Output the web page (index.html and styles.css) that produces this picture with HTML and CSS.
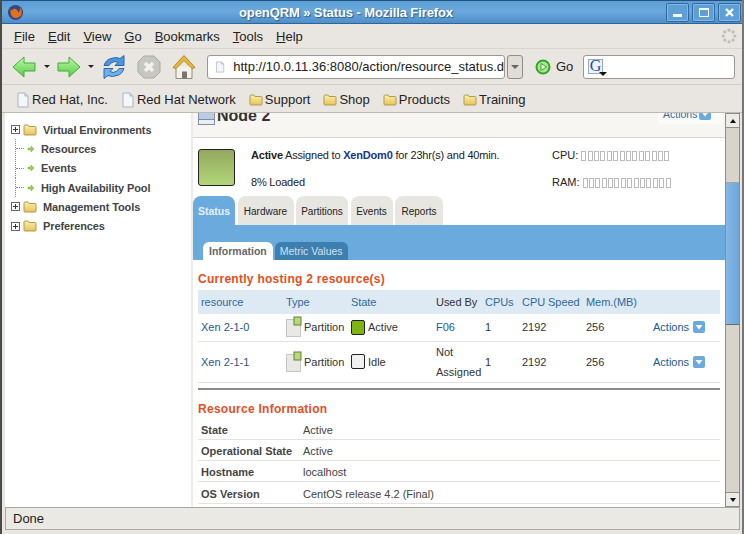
FILE: index.html
```html
<!DOCTYPE html>
<html lang="en">
<head>
<meta charset="utf-8">
<title>openQRM » Status - Mozilla Firefox</title>
<link rel="stylesheet" href="styles.css">
</head>
<body>
<svg class="defs" width="0" height="0">
  <defs>
    <linearGradient id="folderFill" x1="0" y1="0" x2="0" y2="1"><stop offset="0" stop-color="#fdf0a8"/><stop offset="1" stop-color="#e8c258"/></linearGradient>
    <linearGradient id="arrowFill" x1="0" y1="0" x2="0" y2="1"><stop offset="0" stop-color="#c4f8a6"/><stop offset="1" stop-color="#50cc48"/></linearGradient>
    <symbol id="folder" viewBox="0 0 14 12"><path d="M1 3V2q0-1 1-1h3l1 1.500h6q1 0 1 1V10q0 1-1 1H2q-1 0-1-1z" fill="url(#folderFill)" stroke="#b09a50"/></symbol>
    <symbol id="page" viewBox="0 0 14 16"><path d="M2 1h7l3 3v11H2z" fill="#f4f6fa" stroke="#a9b4c6"/><path d="M9 1v3h3" fill="#d5dce8" stroke="#a9b4c6"/></symbol>
    <symbol id="greenarrow" viewBox="0 0 8 8"><path d="M1 3h3V1l3 3-3 3V5H1z" fill="#9ccf50" stroke="#7aa83a" stroke-width=".5"/></symbol>
    <symbol id="down" viewBox="0 0 12 12"><rect width="12" height="12" rx="2" fill="#6aaadd"/><path d="M2.500 4h7L6 8.500z" fill="#fff"/></symbol>
    <symbol id="part" viewBox="0 0 16 22"><rect x=".5" y="3.500" width="14" height="17" fill="#e8e8e4" stroke="#999" stroke-dasharray="1 1"/><rect x="8" y="1" width="7" height="8" fill="#b5d97a" stroke="#66803c"/></symbol>
    <symbol id="seg" viewBox="0 0 5 10"><rect x=".5" y=".5" width="4" height="9" fill="#fff" stroke="#bbb"/></symbol>
  </defs>
</svg>
<div class="window">
  <header class="titlebar">
    <svg class="fx" width="17" height="17" viewBox="0 0 18 18"><circle cx="9" cy="9" r="8" fill="#33497e"/><path d="M3 5q1 3 1 5a6 6 0 0 0 11 2q2-5-2-9 2 4-1 6-1-4-4-4-2 0-3 2-1 0-2-2z" fill="#e2701c"/></svg>
    <span class="title">openQRM » Status - Mozilla Firefox</span>
    <div class="winbtns">
      <span class="winbtn"><i class="min"></i></span>
      <span class="winbtn"><i class="max"></i></span>
      <span class="winbtn"><svg width="11" height="11" viewBox="0 0 11 11"><path d="M2 2l7 7M9 2l-7 7" stroke="#fff" stroke-width="2.400"/></svg></span>
    </div>
  </header>

  <nav class="menubar">
    <span><u>F</u>ile</span><span><u>E</u>dit</span><span><u>V</u>iew</span><span><u>G</u>o</span><span><u>B</u>ookmarks</span><span><u>T</u>ools</span><span><u>H</u>elp</span>
    <svg class="throbber" width="16" height="16" viewBox="0 0 18 18" fill="#bdbdb8"><circle cx="9" cy="2.500" r="1.800"/><circle cx="13.600" cy="4.400" r="1.800"/><circle cx="15.500" cy="9" r="1.800"/><circle cx="13.600" cy="13.600" r="1.800"/><circle cx="9" cy="15.500" r="1.800"/><circle cx="4.400" cy="13.600" r="1.800"/><circle cx="2.500" cy="9" r="1.800"/><circle cx="4.400" cy="4.400" r="1.800"/></svg>
  </nav>

  <div class="navbar">
    <svg class="ic-back" width="24" height="24" viewBox="0 0 24 24"><path d="M1 12 12 2v6h11v8H12v6z" fill="url(#arrowFill)" stroke="#3fae35"/></svg>
    <i class="drop d-back"></i>
    <svg class="ic-fwd" width="24" height="24" viewBox="0 0 24 24"><path d="M23 12 12 2v6H1v8h11v6z" fill="url(#arrowFill)" stroke="#3fae35"/></svg>
    <i class="drop d-fwd"></i>
    <svg class="ic-reload" width="24" height="26" viewBox="0 0 24 25"><path d="M22 1v10h-9l3-3q-3-2-6 0-2 1-3 3H2q2-6 7-7 5-2 9 0z" fill="#4d94dc" stroke="#2a68ac"/><path d="M2 24V14h9l-3 3q3 2 6 0 2-1 3-3h5q-2 6-7 7-5 2-9 0z" fill="#6fb0ea" stroke="#2a68ac"/></svg>
    <svg class="ic-stop" width="24" height="24" viewBox="0 0 24 24"><path d="M7 1h10l6 6v10l-6 6H7l-6-6V7z" fill="#c6c6c2" stroke="#a8a8a4"/><path d="M8 8l8 8M16 8l-8 8" stroke="#f2f2f0" stroke-width="3.500"/></svg>
    <svg class="ic-home" width="24" height="26" viewBox="0 0 24 25"><path d="M4 12v12h16V12" fill="#f4f2ea" stroke="#8f8a78"/><path d="M10 24v-7h5v7" fill="#7b7468"/><path d="M1 13 12 1l11 12-3 1-8-8-8 8z" fill="#e8b83c" stroke="#a98a2a"/></svg>
    <div class="urlbar">
      <div class="urlinput"><svg width="14" height="16"><use href="#page"/></svg><span class="url">http://10.0.11.36:8080/action/resource_status.d</span></div>
      <span class="urldrop"><i></i></span>
    </div>
    <span class="go">
      <svg width="16" height="16" viewBox="0 0 16 16"><circle cx="8" cy="8" r="6.500" fill="#a6e88c" stroke="#36a32a" stroke-width="2"/><path d="M6 4.500 11.500 8 6 11.500z" fill="#f4fff0" stroke="#36a32a"/></svg>
      Go
    </span>
    <div class="search">
      <span class="gmark"><span class="g">G</span><i></i></span>
    </div>
  </div>

  <div class="bookmarks">
    <span class="bm"><svg width="14" height="16"><use href="#page"/></svg>Red Hat, Inc.</span>
    <span class="bm"><svg width="14" height="16"><use href="#page"/></svg>Red Hat Network</span>
    <span class="bm"><svg width="14" height="12"><use href="#folder"/></svg>Support</span>
    <span class="bm"><svg width="14" height="12"><use href="#folder"/></svg>Shop</span>
    <span class="bm"><svg width="14" height="12"><use href="#folder"/></svg>Products</span>
    <span class="bm"><svg width="14" height="12"><use href="#folder"/></svg>Training</span>
  </div>

  <div class="viewport">
    <aside class="tree">
      <div class="tree-row top"><i class="plus"></i><svg width="14" height="12"><use href="#folder"/></svg><b>Virtual Environments</b></div>
      <div class="tree-row leaf"><svg width="8" height="8"><use href="#greenarrow"/></svg><b>Resources</b></div>
      <div class="tree-row leaf"><svg width="8" height="8"><use href="#greenarrow"/></svg><b>Events</b></div>
      <div class="tree-row leaf"><svg width="8" height="8"><use href="#greenarrow"/></svg><b>High Availability Pool</b></div>
      <div class="tree-row top"><i class="plus"></i><svg width="14" height="12"><use href="#folder"/></svg><b>Management Tools</b></div>
      <div class="tree-row top"><i class="plus"></i><svg width="14" height="12"><use href="#folder"/></svg><b>Preferences</b></div>
    </aside>

    <main class="main">
      <div class="node-head">
        <svg class="node-ic" width="17" height="18" viewBox="0 0 17 18"><rect x=".5" y=".5" width="16" height="12" fill="#b9cde6" stroke="#7f8ea8"/><rect x=".5" y="12.500" width="16" height="5" fill="#eee" stroke="#7f8ea8"/></svg>
        <h1>Node 2</h1>
        <div class="node-actions"><span>Actions</span><svg width="12" height="12"><use href="#down"/></svg></div>
      </div>

      <div class="summary">
        <div class="loadbox"></div>
        <div class="summary-text">
          <div><b>Active</b> Assigned to <a class="strong">XenDom0</a> for 23hr(s) and 40min.</div>
          <div>8% Loaded</div>
        </div>
        <div class="meters">
          <div class="meter">CPU:<span class="segs"><svg width="5" height="10"><use href="#seg"/></svg><svg width="5" height="10"><use href="#seg"/></svg><svg width="5" height="10"><use href="#seg"/></svg><svg width="5" height="10"><use href="#seg"/></svg><svg width="5" height="10"><use href="#seg"/></svg><svg width="5" height="10"><use href="#seg"/></svg><svg width="5" height="10"><use href="#seg"/></svg><svg width="5" height="10"><use href="#seg"/></svg><svg width="5" height="10"><use href="#seg"/></svg><svg width="5" height="10"><use href="#seg"/></svg><svg width="5" height="10"><use href="#seg"/></svg><svg width="5" height="10"><use href="#seg"/></svg><svg width="5" height="10"><use href="#seg"/></svg><svg width="5" height="10"><use href="#seg"/></svg></span></div>
          <div class="meter">RAM:<span class="segs"><svg width="5" height="10"><use href="#seg"/></svg><svg width="5" height="10"><use href="#seg"/></svg><svg width="5" height="10"><use href="#seg"/></svg><svg width="5" height="10"><use href="#seg"/></svg><svg width="5" height="10"><use href="#seg"/></svg><svg width="5" height="10"><use href="#seg"/></svg><svg width="5" height="10"><use href="#seg"/></svg><svg width="5" height="10"><use href="#seg"/></svg><svg width="5" height="10"><use href="#seg"/></svg><svg width="5" height="10"><use href="#seg"/></svg><svg width="5" height="10"><use href="#seg"/></svg><svg width="5" height="10"><use href="#seg"/></svg><svg width="5" height="10"><use href="#seg"/></svg><svg width="5" height="10"><use href="#seg"/></svg></span></div>
        </div>
      </div>

      <div class="tabs">
        <span class="tab active">Status</span><span class="tab">Hardware</span><span class="tab">Partitions</span><span class="tab">Events</span><span class="tab">Reports</span>
      </div>
      <div class="band">
        <span class="subtab on">Information</span><span class="subtab">Metric Values</span>
      </div>

      <div class="content">
        <h2>Currently hosting 2 resource(s)</h2>
        <table class="res">
          <thead>
            <tr><th class="c1 lnk">resource</th><th class="c2 lnk">Type</th><th class="c3 lnk">State</th><th class="c4">Used By</th><th class="c5 lnk">CPUs</th><th class="c6 lnk">CPU Speed</th><th class="c7 lnk">Mem.(MB)</th><th class="c8"></th></tr>
          </thead>
          <tbody>
            <tr class="r1">
              <td><a>Xen 2-1-0</a></td>
              <td><span class="cell"><svg width="16" height="22"><use href="#part"/></svg>Partition</span></td>
              <td><span class="cell"><i class="state green"></i>Active</span></td>
              <td><a>F06</a></td><td>1</td><td>2192</td><td>256</td>
              <td><span class="cell act"><a>Actions</a><svg width="12" height="12"><use href="#down"/></svg></span></td>
            </tr>
            <tr class="r2">
              <td><a>Xen 2-1-1</a></td>
              <td><span class="cell"><svg width="16" height="22"><use href="#part"/></svg>Partition</span></td>
              <td><span class="cell"><i class="state idle"></i>Idle</span></td>
              <td>Not Assigned</td><td>1</td><td>2192</td><td>256</td>
              <td><span class="cell act"><a>Actions</a><svg width="12" height="12"><use href="#down"/></svg></span></td>
            </tr>
          </tbody>
        </table>
        <hr class="rule">
        <h2 class="after-rule">Resource Information</h2>
        <dl class="info">
          <div><dt>State</dt><dd>Active</dd></div>
          <div><dt>Operational State</dt><dd>Active</dd></div>
          <div><dt>Hostname</dt><dd>localhost</dd></div>
          <div><dt>OS Version</dt><dd>CentOS release 4.2 (Final)</dd></div>
        </dl>
      </div>
    </main>

    <div class="scrollbar">
      <span class="sb-btn"><i class="up"></i></span>
      <div class="sb-track"><div class="sb-gap"></div><div class="sb-thumb"></div></div>
      <span class="sb-btn"><i class="dn"></i></span>
    </div>
  </div>

  <footer class="statusbar">Done</footer>
</div>
</body>
</html>
```
FILE: styles.css
```css
* { box-sizing: border-box; }
html, body { margin: 0; padding: 0; }
body { width: 744px; height: 534px; overflow: hidden; background: #e9e6e1; font-family: "Liberation Sans", Arial, sans-serif; color: #222; }
.defs { position: absolute; }
.window { width: 744px; height: 534px; display: flex; flex-direction: column; background: #e9e6e1; border-left: 2px solid #4a4a48; border-right: 2px solid #777; overflow: hidden; }

.titlebar { height: 24px; flex: none; margin: 0 -2px; display: flex; align-items: center; background: linear-gradient(#5b9ed6, #6ba8dd 45%, #4f8fc9); border-top: 1px solid #26507c; border-bottom: 1px solid #2f6496; position: relative; padding-left: 7px; }
.fx { flex: none; }
.title { position: absolute; left: 0; right: 0; text-align: center; padding-right: 52px; font-size: 13px; font-weight: bold; letter-spacing: -.1px; color: #fff; text-shadow: 1px 1px 1px #2c5b8a; }
.winbtns { margin-left: auto; display: flex; gap: 3px; padding-right: 3px; position: relative; }
.winbtn { width: 23px; height: 19px; border: 1px solid #2f6a9e; border-radius: 2px; background: #5f9fd8; display: flex; align-items: center; justify-content: center; box-shadow: inset 0 0 0 1px #86b8e4; }
.min { width: 9px; height: 3px; background: #fff; margin-top: 7px; }
.max { width: 10px; height: 9px; border: 1px solid #fff; border-top-width: 2px; }

.menubar { height: 25px; flex: none; display: flex; align-items: center; gap: 13px; padding-left: 12px; font-size: 13px; color: #222; border-bottom: 1px solid #d8d5ce; position: relative; }
.menubar span { white-space: nowrap; }
.throbber { margin-left: auto; margin-right: 5px; }

.navbar { height: 36px; flex: none; display: flex; align-items: center; padding-left: 10px; border-bottom: 1px solid #d0cdc6; font-size: 13px; }
.drop { width: 0; height: 0; border: 3px solid transparent; border-top: 3px solid #222; border-bottom: 0; }
.d-back { margin-left: 8px; margin-right: 7px; }
.d-fwd { margin-left: 7px; margin-right: 8px; }
.ic-stop { margin-left: 11px; }
.ic-home { margin-left: 11px; }
.urlbar { margin-left: 11px; display: flex; gap: 2px; }
.urlinput { width: 298px; height: 24px; background: #fff; border: 1px solid #9a9890; border-radius: 3px; display: flex; align-items: center; gap: 8px; padding-left: 7px; }
.url { font-size: 13px; white-space: nowrap; color: #222; }
.urldrop { width: 16px; height: 24px; border: 1px solid #8f8d86; border-radius: 3px; background: #e0ddd6; display: flex; align-items: center; justify-content: center; }
.urldrop i { width: 0; height: 0; border: 4px solid transparent; border-top: 4px solid #666; border-bottom: 0; }
.go { margin-left: 12px; display: flex; align-items: center; gap: 5px; width: 48px; font-size: 13px; }
.search { width: 152px; height: 24px; background: #fff; border: 1px solid #9a9890; border-radius: 3px; padding: 3px 0 0 4px; }
.gmark { display: flex; width: 15px; height: 15px; position: relative; background: #eef2fa; border: 1px solid #9ab; align-items: center; justify-content: center; }
.g { font-family: "Liberation Serif", serif; font-size: 16px; line-height: 14px; color: #2050b0; }
.gmark i { position: absolute; right: -5px; bottom: -3px; width: 0; height: 0; border: 4px solid transparent; border-top: 4px solid #111; border-bottom: 0; }

.bookmarks { height: 28px; flex: none; display: flex; align-items: center; padding: 2px 0 0 14px; gap: 13px; font-size: 13px; border-bottom: 1px solid #bdbab2; color: #222; }
.bm { display: flex; align-items: center; gap: 2px; white-space: nowrap; }

.viewport { height: 394px; flex: none; margin: 0 2px 0 3px; display: flex; background: #fff; overflow: hidden; }
.tree { width: 188px; flex: none; border-right: 2px solid #ecebe7; padding-top: 7px; font-size: 11px; color: #444; background: #fff; }
.tree-row { height: 19.300px; display: flex; align-items: center; white-space: nowrap; padding-left: 6px; }
.tree-row b { color: #444; letter-spacing: -.1px; }
.plus { width: 9px; height: 9px; border: 1px solid #666; background: linear-gradient(#333, #333) center/5px 1px no-repeat, linear-gradient(#333, #333) center/1px 5px no-repeat, #fff; margin-right: 3px; flex: none; }
.top svg { margin-right: 6px; }
.leaf { padding-left: 11px; background: repeating-linear-gradient(#888 0 1px, transparent 1px 2px) 10px 0 / 1px 100% no-repeat; }
.leaf::before { content: ""; width: 8px; border-top: 1px dotted #888; margin-right: 3px; }
.leaf svg { margin-right: 6px; }

.main { width: 532px; flex: none; overflow: hidden; font-size: 11px; display: flex; flex-direction: column; }
.node-head { height: 25px; flex: none; display: flex; align-items: flex-end; background: #f7f6f3; border-bottom: 1px solid #d6d5d0; padding-left: 5px; position: relative; overflow: hidden; }
.node-ic { flex: none; margin-right: 2px; margin-bottom: 12px; }
.node-head h1 { margin: 0 0 12px; font-size: 16px; line-height: 18px; color: #333; }
.node-actions { position: absolute; right: 3px; top: -9px; width: 64px; height: 20px; background: #fbfbfa; border-radius: 0 0 4px 4px; display: flex; gap: 2px; align-items: center; padding-left: 5px; color: #30689e; font-size: 10.500px; }
.summary { height: 58px; flex: none; display: flex; padding-left: 5px; padding-top: 11px; }
.loadbox { width: 37px; height: 37px; border: 1px solid #222; border-radius: 3px; background: linear-gradient(#93a860, #b3d678); flex: none; }
.summary-text { width: 301px; margin-left: 16px; display: flex; flex-direction: column; gap: 14px; line-height: 13px; color: #222; letter-spacing: -.2px; }
a { color: #25588e; }
a.strong { color: #14368c; font-weight: bold; }
.meters { display: flex; flex-direction: column; gap: 14px; line-height: 13px; }
.meter { display: flex; gap: 2px; align-items: center; height: 13px; }
.segs { display: flex; gap: 1.400px; align-items: center; margin-left: 1px; }
.segs svg { flex: none; }

.tabs { height: 29px; flex: none; display: grid; grid-template-columns: 42px 56px 52px 42px 48px; gap: 2.500px; background: #fff; }
.tab { background: #e8e6e1; border-radius: 8px 8px 0 0; display: flex; align-items: center; justify-content: center; color: #222; font-size: 10px; padding-top: 1px; }
.tab.active { background: #6aaadd; color: #e8f2fb; font-weight: bold; font-size: 10.500px; }
.band { height: 35px; flex: none; background: #6aaadd; display: flex; align-items: flex-end; gap: 2px; padding-left: 10px; }
.subtab { height: 18px; padding: 0 5px; background: #3d7fae; color: #cfe4f4; border-radius: 6px 6px 0 0; display: flex; align-items: center; font-size: 10.500px; }
.subtab.on { background: #fff; color: #666; font-weight: bold; padding: 0 6px; }

.content { padding: 12px 4px 0 5px; flex: 1; }
h2 { margin: 0; color: #e64e1e; font-size: 12px; line-height: 15px; font-weight: bold; letter-spacing: .27px; }
.res { width: 522px; border-collapse: collapse; table-layout: fixed; margin-top: 3px; }
.res th { height: 24px; background: #dde9f3; font-weight: normal; text-align: left; padding: 0 0 0 3px; color: #333; white-space: nowrap; letter-spacing: -.05px; }
.res th.lnk { color: #2f6a9e; }
.c1 { width: 85px; } .c2 { width: 65px; } .c3 { width: 85px; } .c4 { width: 49px; } .c5 { width: 37px; } .c6 { width: 64px; } .c7 { width: 67px; } .c8 { width: auto; }
.res td { padding: 0 0 0 3px; border-bottom: 1px solid #e2e2df; color: #333; line-height: 20px; }
.r1 td { height: 27px; }
.r2 td { height: 41px; }
.cell { display: flex; align-items: center; gap: 2px; white-space: nowrap; }
.act { gap: 4px; }
.state { width: 14px; height: 15px; border: 1px solid #222; border-radius: 2px; flex: none; margin-right: 1px; }
.green { background: #7fb414; }
.idle { background: #f0f0f0; }
.rule { border: 0; border-top: 2px solid #8a8a88; margin: 5px 0 0; width: 522px; height: 0; }
.after-rule { margin-top: 12px; }
.info { margin: 2px 0 0; width: 522px; }
.info div { height: 21.300px; display: flex; align-items: center; border-bottom: 1px solid #e2e2df; padding-top: 2px; }
.info dt { width: 105px; padding-left: 3px; font-weight: bold; color: #444; }
.info dd { margin: 0; color: #444; }

.scrollbar { flex: 1; display: flex; flex-direction: column; background: #d8d4cc; border-left: 1px solid #8f8d86; border-right: 1px solid #8f8d86; }
.sb-btn { height: 15px; flex: none; background: #ecebe6; border-top: 1px solid #8f8d86; border-bottom: 1px solid #8f8d86; display: flex; align-items: center; justify-content: center; }
.sb-btn i { width: 0; height: 0; border: 3px solid transparent; }
.sb-btn .up { border-top: 0; border-bottom: 4px solid #111; }
.sb-btn .dn { border-bottom: 0; border-top: 4px solid #111; }
.sb-track { flex: 1; display: flex; flex-direction: column; }
.sb-gap { height: 55px; flex: none; background: #d8d4cc; border-bottom: 1px solid #a8a69e; }
.sb-thumb { height: 142px; flex: none; background: linear-gradient(90deg, #86b8e6, #6aa6dc); border-bottom: 1px solid #6a6a66; }

.statusbar { flex: none; height: 23px; margin: 0 2px 4px 3px; border: 1px solid #a8a69e; background: #ebe9e4; font-size: 13px; padding: 0 0 1px 7px; display: flex; align-items: center; color: #222; }
```
